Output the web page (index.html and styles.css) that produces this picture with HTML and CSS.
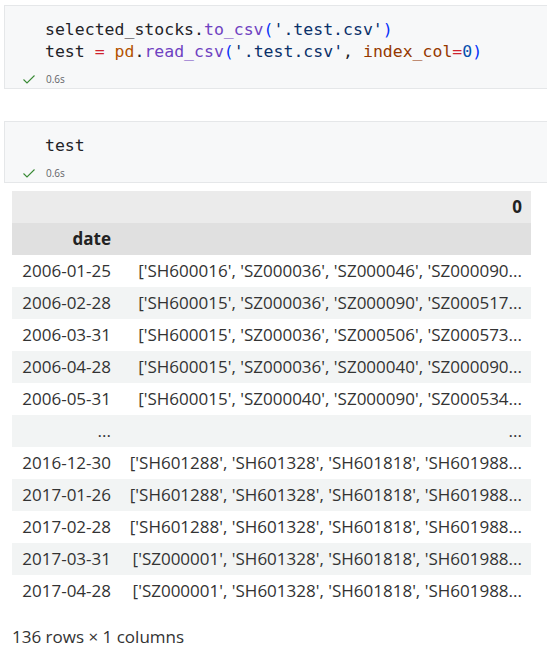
FILE: index.html
```html
<!DOCTYPE html>
<html>
<head>
<meta charset="utf-8">
<link rel="stylesheet" href="styles.css">
</head>
<body>
<div class="page">
  <div class="cell">
    <div class="editor">
      <div class="line"><span class="v">selected_stocks</span>.<span class="fn">to_csv</span><span class="br">(</span><span class="str">'.test.csv'</span><span class="br">)</span></div>
      <div class="line"><span class="v">test</span> <span class="op">=</span> <span class="mod">pd</span>.<span class="fn">read_csv</span><span class="br">(</span><span class="str">'.test.csv'</span>, <span class="prm">index_col</span><span class="op">=</span><span class="num">0</span><span class="br">)</span></div>
    </div>
    <div class="status">
      <svg class="check" width="14" height="12" viewBox="0 0 14 12"><path d="M1.5 6.5 L5 10 L12.5 2.5" fill="none" stroke="#388a34" stroke-width="1.1"/></svg>
      <span class="time">0.6s</span>
    </div>
  </div>

  <div class="cell cell2">
    <div class="editor">
      <div class="line"><span class="v">test</span></div>
    </div>
    <div class="status">
      <svg class="check" width="14" height="12" viewBox="0 0 14 12"><path d="M1.5 6.5 L5 10 L12.5 2.5" fill="none" stroke="#388a34" stroke-width="1.1"/></svg>
      <span class="time">0.6s</span>
    </div>
  </div>

  <div class="output">
    <table class="df">
      <thead>
        <tr class="h1"><th></th><th>0</th></tr>
        <tr class="h2"><th>date</th><th></th></tr>
      </thead>
      <tbody>
        <tr><th>2006-01-25</th><td>['SH600016', 'SZ000036', 'SZ000046', 'SZ000090...</td></tr>
        <tr><th>2006-02-28</th><td>['SH600015', 'SZ000036', 'SZ000090', 'SZ000517...</td></tr>
        <tr><th>2006-03-31</th><td>['SH600015', 'SZ000036', 'SZ000506', 'SZ000573...</td></tr>
        <tr><th>2006-04-28</th><td>['SH600015', 'SZ000036', 'SZ000040', 'SZ000090...</td></tr>
        <tr><th>2006-05-31</th><td>['SH600015', 'SZ000040', 'SZ000090', 'SZ000534...</td></tr>
        <tr><th>...</th><td>...</td></tr>
        <tr><th>2016-12-30</th><td>['SH601288', 'SH601328', 'SH601818', 'SH601988...</td></tr>
        <tr><th>2017-01-26</th><td>['SH601288', 'SH601328', 'SH601818', 'SH601988...</td></tr>
        <tr><th>2017-02-28</th><td>['SH601288', 'SH601328', 'SH601818', 'SH601988...</td></tr>
        <tr><th>2017-03-31</th><td>['SZ000001', 'SH601328', 'SH601818', 'SH601988...</td></tr>
        <tr><th>2017-04-28</th><td>['SZ000001', 'SH601328', 'SH601818', 'SH601988...</td></tr>
      </tbody>
    </table>
    <p class="shape">136 rows × 1 columns</p>
  </div>
</div>
</body>
</html>
```
FILE: styles.css
```css
html, body {
  margin: 0;
  padding: 0;
  background: #ffffff;
  overflow: hidden;
}
.page {
  width: 547px;
  height: 654px;
  overflow: hidden;
  padding-top: 5px;
  box-sizing: border-box;
}
.cell {
  margin-left: 4px;
  width: 580px;
  border: 1px solid #e5e7e9;
  background: #f7f8f9;
  box-sizing: border-box;
}
.cell2 {
  margin-top: 32px;
}
.editor {
  padding: 13px 0 7px 40px;
  font-family: "DejaVu Sans Mono", "Liberation Mono", monospace;
  font-size: 16.5px;
  line-height: 22px;
  color: #1f2328;
}
.line {
  white-space: pre;
  height: 22px;
}
.v { color: #1f2328; }
.fn { color: #6f42c1; }
.br { color: #0431fa; }
.str { color: #0a3069; }
.op { color: #cf222e; }
.mod { color: #b35200; }
.prm { color: #953800; }
.num { color: #0550ae; }
.status {
  display: flex;
  align-items: center;
  height: 17px;
  padding-left: 17px;
  padding-bottom: 1px;
}
.check {
  display: block;
  margin-top: 1px;
}
.time {
  margin-left: 10px;
  font-family: "Open Sans", "Noto Sans", sans-serif;
  font-size: 10px;
  color: #5f6368;
  line-height: 12px;
}
.output {
  padding: 8px 0 0 12px;
}
.df {
  border-collapse: collapse;
  border-spacing: 0;
  width: 519px;
  font-family: "Open Sans", "Noto Sans", sans-serif;
  font-size: 17px;
  color: #333333;
}
.df th, .df td {
  height: 32px;
  padding: 0 9px 0 8px;
  text-align: right;
  white-space: nowrap;
  box-sizing: border-box;
  font-weight: normal;
  line-height: 20px;
}
.df thead th {
  font-weight: bold;
  color: #222222;
}
.df tr.h1 { background: #ebebeb; }
.df tr.h2 { background: #e0e0e0; }
.df tbody th { width: 108px; }
.df tbody tr:nth-child(even) { background: #f2f4f4; }
.df tbody tr:nth-child(odd) { background: #ffffff; }
.shape {
  margin: 20px 0 0 0;
  font-family: "Open Sans", "Noto Sans", sans-serif;
  font-size: 17px;
  color: #333333;
  line-height: 20px;
}
```
